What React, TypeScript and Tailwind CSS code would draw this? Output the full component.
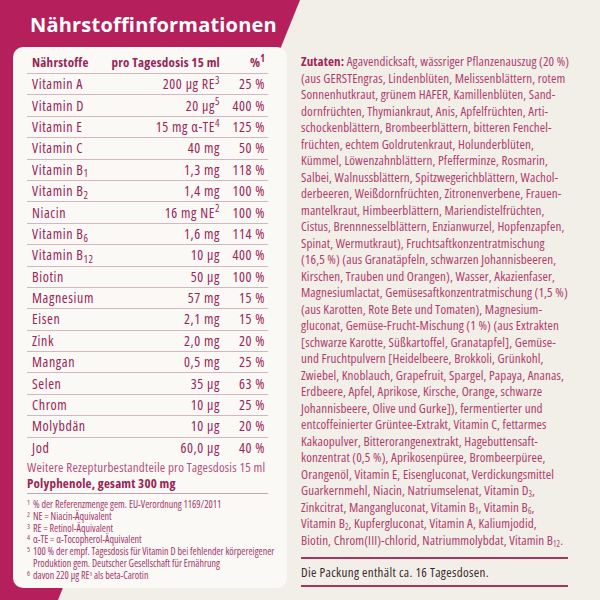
import type { ReactNode } from 'react'

interface Row {
  name: ReactNode
  amount: ReactNode
  pct: string
}

// Open Sans has a width axis; the label uses a narrow humanist sans
const sans = "font-['Open_Sans',sans-serif]"

const rows: Row[] = [
  { name: 'Vitamin A', amount: <>200 µg RE<sup>3</sup></>, pct: '25 %' },
  { name: 'Vitamin D', amount: <>20 µg<sup>5</sup></>, pct: '400 %' },
  { name: 'Vitamin E', amount: <>15 mg α-TE<sup>4</sup></>, pct: '125 %' },
  { name: 'Vitamin C', amount: '40 mg', pct: '50 %' },
  { name: <>Vitamin B<sub>1</sub></>, amount: '1,3 mg', pct: '118 %' },
  { name: <>Vitamin B<sub>2</sub></>, amount: '1,4 mg', pct: '100 %' },
  { name: 'Niacin', amount: <>16 mg NE<sup>2</sup></>, pct: '100 %' },
  { name: <>Vitamin B<sub>6</sub></>, amount: '1,6 mg', pct: '114 %' },
  { name: <>Vitamin B<sub>12</sub></>, amount: '10 µg', pct: '400 %' },
  { name: 'Biotin', amount: '50 µg', pct: '100 %' },
  { name: 'Magnesium', amount: '57 mg', pct: '15 %' },
  { name: 'Eisen', amount: '2,1 mg', pct: '15 %' },
  { name: 'Zink', amount: '2,0 mg', pct: '20 %' },
  { name: 'Mangan', amount: '0,5 mg', pct: '25 %' },
  { name: 'Selen', amount: '35 µg', pct: '63 %' },
  { name: 'Chrom', amount: '10 µg', pct: '25 %' },
  { name: 'Molybdän', amount: '10 µg', pct: '20 %' },
  { name: 'Jod', amount: '60,0 µg', pct: '40 %' },
]

const footnotes: { n: string; text: ReactNode }[] = [
  { n: '1', text: '% der Referenzmenge gem. EU-Verordnung 1169/2011' },
  { n: '2', text: 'NE = Niacin-Äquivalent' },
  { n: '3', text: 'RE = Retinol-Äquivalent' },
  { n: '4', text: 'α-TE = α-Tocopherol-Äquivalent' },
  { n: '5', text: '100 % der empf. Tagesdosis für Vitamin D bei fehlender körpereigener' },
  { n: '', text: 'Produktion gem. Deutscher Gesellschaft für Ernährung' },
  { n: '6', text: <>davon 220 µg RE<sup className="text-[6px]">3</sup> als beta-Carotin</> },
]

const Sub = ({ children }: { children: ReactNode }) => (
  <sub className="text-[8px]">{children}</sub>
)

const ingredients: ReactNode[] = [
  <><span className="font-bold text-[#a0255a]">Zutaten:</span> Agavendicksaft, wässriger Pflanzenauszug (20 %)</>,
  '(aus GERSTEngras, Lindenblüten, Melissenblättern, rotem',
  'Sonnenhutkraut, grünem HAFER, Kamillenblüten, Sand-',
  'dornfrüchten, Thymiankraut, Anis, Apfelfrüchten, Arti-',
  'schockenblättern, Brombeerblättern, bitteren Fenchel-',
  'früchten, echtem Goldrutenkraut, Holunderblüten,',
  'Kümmel, Löwenzahnblättern, Pfefferminze, Rosmarin,',
  'Salbei, Walnussblättern, Spitzwegerichblättern, Wachol-',
  'derbeeren, Weißdornfrüchten, Zitronenverbene, Frauen-',
  'mantelkraut, Himbeerblättern, Mariendistelfrüchten,',
  'Cistus, Brennnesselblättern, Enzianwurzel, Hopfenzapfen,',
  'Spinat, Wermutkraut), Fruchtsaftkonzentratmischung',
  '(16,5 %) (aus Granatäpfeln, schwarzen Johannisbeeren,',
  'Kirschen, Trauben und Orangen), Wasser, Akazienfaser,',
  'Magnesiumlactat, Gemüsesaftkonzentratmischung (1,5 %)',
  '(aus Karotten, Rote Bete und Tomaten), Magnesium-',
  'gluconat, Gemüse-Frucht-Mischung (1 %) (aus Extrakten',
  '[schwarze Karotte, Süßkartoffel, Granatapfel], Gemüse-',
  'und Fruchtpulvern [Heidelbeere, Brokkoli, Grünkohl,',
  'Zwiebel, Knoblauch, Grapefruit, Spargel, Papaya, Ananas,',
  'Erdbeere, Apfel, Aprikose, Kirsche, Orange, schwarze',
  'Johannisbeere, Olive und Gurke]), fermentierter und',
  'entcoffeinierter Grüntee-Extrakt, Vitamin C, fettarmes',
  'Kakaopulver, Bitterorangenextrakt, Hagebuttensaft-',
  'konzentrat (0,5 %), Aprikosenpüree, Brombeerpüree,',
  'Orangenöl, Vitamin E, Eisengluconat, Verdickungsmittel',
  <>Guarkernmehl, Niacin, Natriumselenat, Vitamin D<Sub>3</Sub>,</>,
  <>Zinkcitrat, Mangangluconat, Vitamin B<Sub>1</Sub>, Vitamin B<Sub>6</Sub>,</>,
  <>Vitamin B<Sub>2</Sub>, Kupfergluconat, Vitamin A, Kaliumjodid,</>,
  <>Biotin, Chrom(III)-chlorid, Natriummolybdat, Vitamin B<Sub>12</Sub>.</>,
]

function NutrientTable() {
  return (
    <div className={`${sans} text-[#9a2456] [font-stretch:75%]`}>
      <div className="grid h-[21px] grid-cols-[1fr_auto_48px] items-center border-b border-[#d3b6c2] text-[13px] font-bold tracking-[0.25px]">
        <span className="pl-[5px]">Nährstoffe</span>
        <span className="text-right">pro Tagesdosis 15 ml</span>
        <span className="pr-[3px] text-right">
          %<sup>1</sup>
        </span>
      </div>
      {rows.map((r, i) => (
        <div
          key={i}
          className={`grid h-[21.4px] grid-cols-[1fr_auto_48px] items-center text-[14px] leading-[18px] tracking-[0.6px] ${
            i < rows.length - 1 ? 'border-b border-[#d3b6c2]' : ''
          }`}
        >
          <span className="pl-[5px]">{r.name}</span>
          <span className="text-right">{r.amount}</span>
          <span className="pr-[3px] text-right">{r.pct}</span>
        </div>
      ))}
    </div>
  )
}

export default function App() {
  return (
    <div className="relative h-[600px] w-[600px] overflow-hidden bg-[#f2eee8]">
      {/* crimson diagonal band behind the card */}
      <div className="absolute inset-0 bg-[#b51f5b] [clip-path:polygon(0_0,300px_0,58px_600px,0_600px)]" />

      <div className="relative flex h-full">
        <div className="flex w-[300px] shrink-0 flex-col">
          <h1 className={`${sans} h-[47px] pl-[30px] pt-[12px] text-[20px] font-bold leading-[26px] tracking-[0.2px] text-white [font-stretch:94%]`}>
            Nährstoffinformationen
          </h1>
          <div className="ml-[13px] w-[274px] rounded-[10px] bg-[#fbf9f6] pb-[6px] pl-[14px] pr-[19px] pt-[6px]">
            <NutrientTable />

            <div className={`${sans} border-b border-[#c9a3b3] pb-[2px] text-[13px] leading-[16px] tracking-[0.2px] [font-stretch:75%]`}>
              <div className="text-[#b5507c]">Weitere Rezepturbestandteile pro Tagesdosis 15 ml</div>
              <div className="font-bold text-[#9a2456]">Polyphenole, gesamt 300 mg</div>
            </div>

            <div className={`${sans} mt-[5px] text-[10px] leading-[11.8px] text-[#a3356a] [font-stretch:75%]`}>
              {footnotes.map((f, i) => (
                <div key={i} className="flex h-[11.8px]">
                  <span className="w-[6px] shrink-0 text-[7px] leading-[8px]">{f.n}</span>
                  <span className="whitespace-nowrap">{f.text}</span>
                </div>
              ))}
            </div>
          </div>
        </div>

        <div className={`${sans} ml-[1px] w-[267px] pt-[53px] [font-stretch:75%]`}>
          <div className="text-[13px] leading-[16.52px] tracking-[0.12px] text-[#b03c6e]">
            {ingredients.map((line, i) => (
              <div key={i} className="h-[16.52px] whitespace-nowrap">
                {line}
              </div>
            ))}
          </div>
          <div className="mt-[9px] border-y-2 border-[#a8345f] py-[5px] text-[13px] leading-[16px] tracking-[0.35px] text-[#3b2a2c]">
            Die Packung enthält ca. 16 Tagesdosen.
          </div>
        </div>
      </div>
    </div>
  )
}
